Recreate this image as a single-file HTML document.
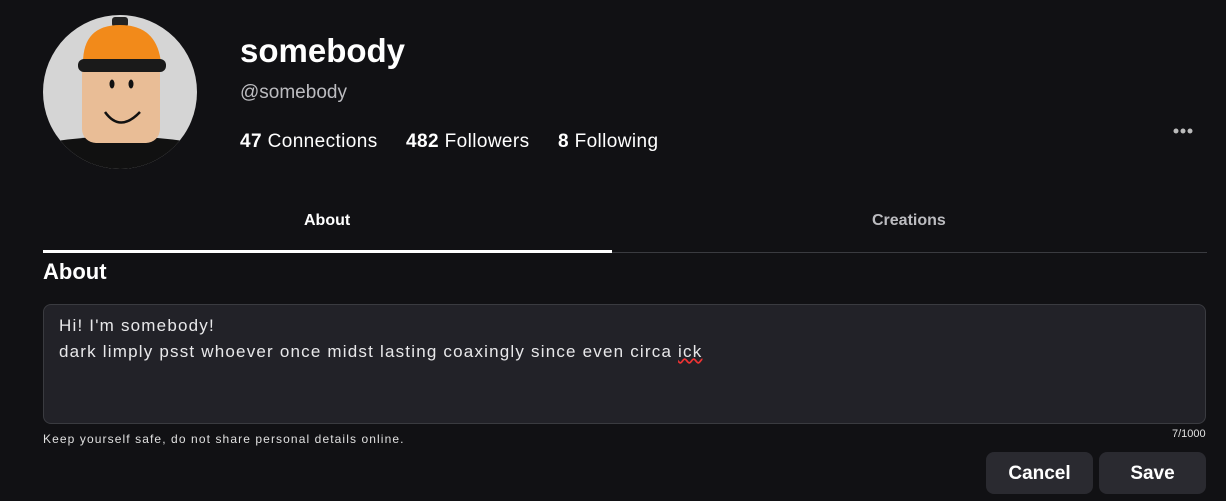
<!DOCTYPE html>
<html><head><style>
body{margin:0;width:1226px;height:501px;background:#111114;font-family:"Liberation Sans",sans-serif;color:#fff;position:relative;overflow:hidden}
.a{position:absolute}
</style></head><body>
<svg class="a" style="left:43px;top:15px" width="154" height="154" viewBox="0 0 154 154">
<defs><clipPath id="c"><circle cx="77" cy="77" r="77"/></clipPath></defs>
<g clip-path="url(#c)">
<rect width="154" height="154" fill="#d5d5d5"/>
<path d="M0 128 Q77 115 154 128 L154 154 L0 154Z" fill="#111"/>
<rect x="39" y="45" width="78" height="83" rx="14" fill="#e9bd96"/>
<rect x="69" y="2" width="16" height="10" rx="3" fill="#222"/>
<path d="M40 48 Q40 10 77 10 Q114 10 118 48Z" fill="#f28a1a"/>
<rect x="35" y="44" width="88" height="13" rx="6" fill="#1a1a1a"/>
<ellipse cx="69" cy="69" rx="2.5" ry="4.5" fill="#111"/>
<ellipse cx="88" cy="69" rx="2.5" ry="4.5" fill="#111"/>
<path d="M62 97 Q77 118 97 97" stroke="#111" stroke-width="2.5" fill="none"/>
</g></svg>
<div class="a" style="left:240px;top:32px;font-size:33px;font-weight:bold">somebody</div>
<div class="a" style="left:240px;top:82px;font-size:19px;color:#bcbcc0">@somebody</div>
<div class="a" style="left:240px;top:131px;font-size:19px;letter-spacing:0.4px"><b>47</b> Connections &nbsp;&nbsp;&nbsp; <b>482</b> Followers &nbsp;&nbsp;&nbsp; <b>8</b> Following</div>
<svg class="a" style="left:1173px;top:128px" width="22" height="6"><circle cx="3" cy="3" r="2.5" fill="#bbb"/><circle cx="10" cy="3" r="2.5" fill="#bbb"/><circle cx="17" cy="3" r="2.5" fill="#bbb"/></svg>
<div class="a" style="left:304px;top:212px;font-size:16px;font-weight:bold">About</div>
<div class="a" style="left:872px;top:212px;font-size:16px;font-weight:bold;color:#bcbcc0">Creations</div>
<div class="a" style="left:43px;top:252px;width:1164px;height:1px;background:#3a3b40"></div>
<div class="a" style="left:43px;top:250px;width:569px;height:3px;background:#fff"></div>
<div class="a" style="left:43px;top:259px;font-size:22px;font-weight:bold">About</div>
<div class="a" style="left:43px;top:304px;width:1161px;height:118px;background:#222228;border:1px solid #3a3b40;border-radius:8px"></div>
<div class="a" style="left:59px;top:313px;font-size:17px;line-height:26px;color:#e8e8ea;letter-spacing:1.2px">Hi! I'm somebody!<br>dark limply psst whoever once midst lasting coaxingly since even circa <span style="text-decoration:underline wavy #e33">ick</span></div>
<div class="a" style="left:43px;top:432px;font-size:12px;color:#e0e0e0;letter-spacing:1.1px">Keep yourself safe, do not share personal details online.</div>
<div class="a" style="left:1172px;top:428px;font-size:11px;color:#e0e0e0">7/1000</div>
<div class="a" style="left:986px;top:452px;width:107px;height:42px;background:#2a2a30;border-radius:8px;font-size:19px;font-weight:bold;text-align:center;line-height:44px">Cancel</div>
<div class="a" style="left:1099px;top:452px;width:107px;height:42px;background:#2a2a30;border-radius:8px;font-size:19px;font-weight:bold;text-align:center;line-height:44px">Save</div>
</body></html>
